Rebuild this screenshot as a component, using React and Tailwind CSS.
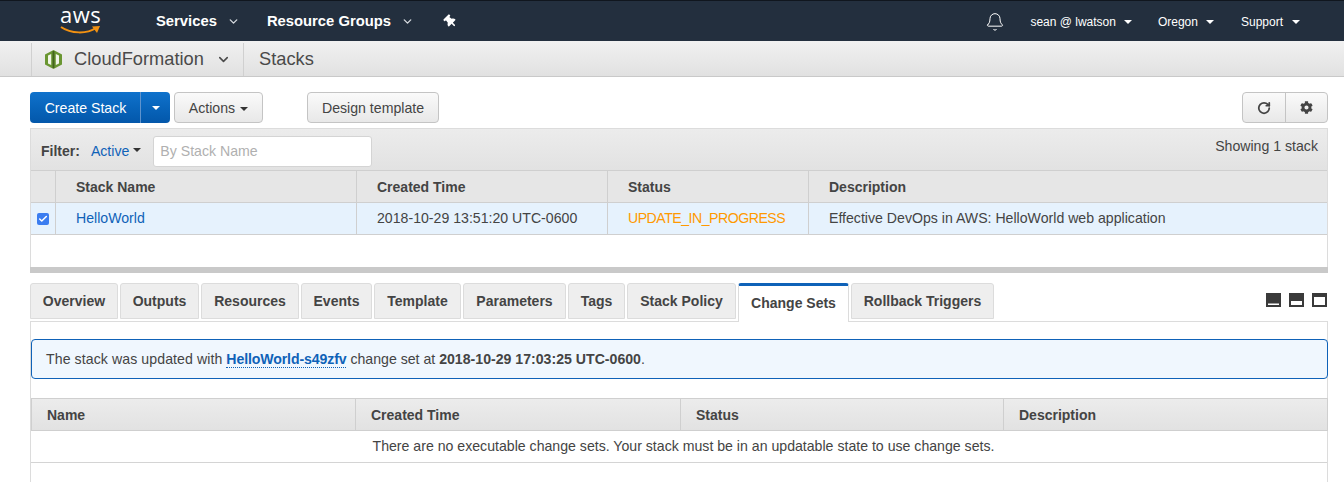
import React from 'react';
import { Bell, ChevronDown, RotateCw, Check } from 'lucide-react';
import { FaCog, FaThumbtack } from 'react-icons/fa';

const tabs = [
  ['Overview', 'w-[88px]'],
  ['Outputs', 'w-[79px]'],
  ['Resources', 'w-[98px]'],
  ['Events', 'w-[71px]'],
  ['Template', 'w-[87px]'],
  ['Parameters', 'w-[103px]'],
  ['Tags', 'w-[57px]'],
  ['Stack Policy', 'w-[109px]'],
];

const Caret = ({ className = 'border-t-[#333]' }) => (
  <span className={`inline-block w-0 h-0 border-x-4 border-x-transparent border-t-4 ${className}`} />
);

const HeadCell = ({ className = '', children }) => (
  <div className={`flex items-center font-bold text-[#444] text-[14px] pt-[1px] ${className}`}>{children}</div>
);

// the three little split-view squares on the right of the tabs
const PaneIcon = ({ variant }) => (
  <svg width="15" height="14" viewBox="0 0 15 14">
    <rect width="15" height="14" fill="#3a3a3a" />
    {variant === 'bottom' && <rect x="2" y="10.5" width="11" height="1.5" fill="#fff" />}
    {variant === 'middle' && <rect x="2" y="8" width="11" height="4" fill="#fff" />}
    {variant === 'top' && <rect x="2" y="4" width="11" height="8" fill="#fff" />}
  </svg>
);

const CubeIcon = () => (
  <svg width="17" height="19" viewBox="0 0 17 19">
    <path d="M8.5 0 L17 4.5 V14.5 L8.5 19 L0 14.5 V4.5 Z" fill="#6a9632" />
    <path d="M6.2 4 V15 L3 13.5 V5.5 Z" fill="#f1f5e8" />
    <path d="M10.8 4 V15 L14 13.5 V5.5 Z" fill="#f1f5e8" />
    <rect x="7.6" y="1" width="1.8" height="17" fill="#43621d" />
  </svg>
);

const TopBar = () => (
  <div className="h-[41px] bg-[#232f3e] border-t border-[#10161e] flex items-center text-white shrink-0">
    <div className="w-[156px] flex justify-start pl-[60px] relative h-full">
      <span className="text-[22px] leading-[24px] tracking-[0.5px] mt-[1px] font-['Open_Sans',sans-serif]">aws</span>
      <svg className="absolute left-[60px] top-[24px]" width="42" height="10" viewBox="0 0 42 10">
        <path d="M1 2 C 11 9, 27 9, 36 3" stroke="#f29111" strokeWidth="2" fill="none" />
        <path d="M32 1.5 L40 1 L37 8 Z" fill="#f29111" />
      </svg>
    </div>
    <div className="flex items-center font-bold text-[14.8px] pt-[1px]">
      <span>Services</span>
      <ChevronDown size={13} strokeWidth={2.5} className="ml-[10px] mr-[27px] text-[#d5d9de]" />
      <span>Resource Groups</span>
      <ChevronDown size={13} strokeWidth={2.5} className="ml-[10px] mr-[30px] text-[#d5d9de]" />
      <FaThumbtack size={13} className="-rotate-45" />
    </div>
    <div className="ml-auto flex items-center text-[12px] pr-[44px] pt-[1px]">
      <Bell size={20} strokeWidth={1.2} className="mr-[25px]" />
      <span>sean @ lwatson</span>
      <span className="ml-[8px] mr-[26px] flex"><Caret className="border-t-white" /></span>
      <span>Oregon</span>
      <span className="ml-[8px] mr-[27px] flex"><Caret className="border-t-white" /></span>
      <span>Support</span>
      <span className="ml-[9px] flex"><Caret className="border-t-white" /></span>
    </div>
  </div>
);

const SubBar = () => (
  <div className="h-[36px] bg-gradient-to-b from-[#f1f1f1] to-[#e1e1e1] border-b border-[#c9c9c9] flex pl-[31px] text-[18.25px] text-[#4a4a4a] shrink-0">
    <div className="flex items-center w-[213px] h-[33px] border-x border-[#d0d0d0] pl-[13px] self-end">
      <CubeIcon />
      <span className="ml-[12px] -mt-[2px]">CloudFormation</span>
      <ChevronDown size={15} strokeWidth={2.5} className="ml-[12px]" />
    </div>
    <div className="flex items-center pl-[15px] pt-[1px]">Stacks</div>
  </div>
);

const Toolbar = () => (
  <div className="flex items-center h-[31px] mt-[15px] text-[#444]">
    <div className="flex h-[31px] w-[140px] rounded-[4px] bg-gradient-to-b from-[#0f72cc] to-[#0357aa] text-white">
      <span className="w-[111px] flex items-center justify-center border-r border-[#5f93cd] pt-[2px] pl-[1px]">Create Stack</span>
      <span className="flex-1 flex items-center justify-center"><Caret className="border-t-white" /></span>
    </div>
    <button className="ml-[4px] h-[31px] w-[89px] rounded-[4px] border border-[#c4c4c4] bg-gradient-to-b from-[#fafafa] to-[#e8e8e8] flex items-center justify-center gap-[5px] pt-[2px]">
      Actions <Caret />
    </button>
    <button className="ml-[44px] h-[31px] w-[132px] rounded-[4px] border border-[#c4c4c4] bg-gradient-to-b from-[#fafafa] to-[#e8e8e8] pt-[2px]">
      Design template
    </button>
    <div className="ml-auto flex h-[31px] w-[86px] rounded-[4px] border border-[#c4c4c4] bg-gradient-to-b from-[#fafafa] to-[#e8e8e8]">
      <span className="w-[43px] flex items-center justify-center border-r border-[#c4c4c4]">
        <RotateCw size={14} strokeWidth={3} />
      </span>
      <span className="flex-1 flex items-center justify-center">
        <FaCog size={13} />
      </span>
    </div>
  </div>
);

const StackTable = () => (
  <div className="mt-[5px] border-x border-t border-[#dcdcdc] flex flex-col">
    <div className="h-[42px] bg-gradient-to-b from-[#ececec] to-[#e2e2e2] border-b border-[#cfcfcf] flex items-start pl-[10px] pr-[9px] shrink-0">
      <span className="font-bold text-[#444] mt-[12px] text-[14px]">Filter:</span>
      <span className="text-[#0f62b8] ml-[11px] mt-[12px]">Active</span>
      <span className="ml-[4px] mt-[19px] flex"><Caret /></span>
      <div className="ml-[12px] mt-[7px] w-[219px] h-[31px] bg-white border border-[#d4d4d4] rounded-[3px] flex items-center pl-[6px] text-[#b0b0b0]">
        By Stack Name
      </div>
      <span className="ml-auto mt-[7px] text-[#444]">Showing 1 stack</span>
    </div>
    <div className="h-[32px] bg-[#e6e6e6] border-b border-[#cfcfcf] flex shrink-0">
      <div className="w-[25px] border-r border-[#cfcfcf]" />
      <HeadCell className="w-[301px] border-r border-[#cfcfcf] pl-[20px]">Stack Name</HeadCell>
      <HeadCell className="w-[251px] border-r border-[#cfcfcf] pl-[20px]">Created Time</HeadCell>
      <HeadCell className="w-[201px] border-r border-[#cfcfcf] pl-[20px]">Status</HeadCell>
      <HeadCell className="flex-1 pl-[20px]">Description</HeadCell>
    </div>
    <div className="h-[32px] bg-[#e6f2fd] border-b border-[#cfcfcf] flex text-[#444] shrink-0">
      <div className="w-[25px] border-r border-[#cfcfcf] flex items-center justify-center">
        <span className="w-[12px] h-[12px] rounded-[2px] bg-[#3b7df0] flex items-center justify-center text-white">
          <Check size={10} strokeWidth={3.5} />
        </span>
      </div>
      <div className="w-[301px] border-r border-[#cfcfcf] pl-[20px] flex items-center text-[#0f62b8]">HelloWorld</div>
      <div className="w-[251px] border-r border-[#cfcfcf] pl-[20px] flex items-center">2018-10-29 13:51:20 UTC-0600</div>
      <div className="w-[201px] border-r border-[#cfcfcf] pl-[20px] flex items-center text-[#ff9900] tracking-[-0.5px]">UPDATE_IN_PROGRESS</div>
      <div className="flex-1 pl-[20px] flex items-center">Effective DevOps in AWS: HelloWorld web application</div>
    </div>
  </div>
);

const TabBar = () => (
  <div className="mt-[10px] h-[39px] flex items-start gap-[2px] border-b border-[#dcdcdc] relative text-[14px]">
    {tabs.map(([name, width]) => (
      <div
        key={name}
        className={`${width} h-[36px] bg-[#eeeeee] border border-[#dcdcdc] rounded-t-[3px] flex items-center justify-center font-bold text-[#444]`}
      >
        {name}
      </div>
    ))}
    <div className="w-[111px] h-[39px] bg-white border-x border-[#dcdcdc] border-t-[3px] border-t-[#0f62b8] rounded-t-[3px] flex items-center justify-center font-bold text-[#444] pb-[1px] z-10 -mb-[1px]">
      Change Sets
    </div>
    <div className="w-[143px] h-[36px] bg-[#eeeeee] border border-[#dcdcdc] rounded-t-[3px] flex items-center justify-center font-bold text-[#444]">
      Rollback Triggers
    </div>
    <div className="ml-auto flex gap-[8px] mt-[10px] mr-[1px]">
      <PaneIcon variant="bottom" />
      <PaneIcon variant="middle" />
      <PaneIcon variant="top" />
    </div>
  </div>
);

const ChangeSets = () => (
  <div className="border-x border-[#dcdcdc] flex-1 pt-[17px] text-[#444]">
    <div className="h-[40px] -mr-[1px] bg-[#f0f7fe] border border-[#0f62b8] rounded-[4px] flex items-center pl-[14px] pt-[1px]">
      <span>
        <span className="tracking-[0.08px]">The stack was updated with</span>{' '}
        <span className="font-bold text-[#0f62b8] border-b border-dotted border-[#0f62b8] tracking-[-0.12px]">HelloWorld-s49zfv</span>{' '}
        change set at <span className="font-bold">2018-10-29 17:03:25 UTC-0600</span>.
      </span>
    </div>
    <div className="mt-[19px] h-[33px] -mr-[1px] bg-gradient-to-b from-[#ececec] to-[#e2e2e2] border border-[#cfcfcf] flex">
      <HeadCell className="w-[324px] border-r border-[#cfcfcf] pl-[15px]">Name</HeadCell>
      <HeadCell className="w-[325px] border-r border-[#cfcfcf] pl-[15px]">Created Time</HeadCell>
      <HeadCell className="w-[323px] border-r border-[#cfcfcf] pl-[15px]">Status</HeadCell>
      <HeadCell className="flex-1 pl-[15px]">Description</HeadCell>
    </div>
    <div className="h-[32px] border-b border-[#d4d4d4] flex items-center justify-center pl-[9px]">
      There are no executable change sets. Your stack must be in an updatable state to use change sets.
    </div>
  </div>
);

export default function App() {
  return (
    <div className="w-[1344px] h-[482px] overflow-hidden bg-white flex flex-col text-[14.13px] font-['Liberation_Sans',Arial,sans-serif]">
      <TopBar />
      <SubBar />
      <div className="flex-1 flex flex-col px-[30px] pr-[16px] min-h-0">
        <Toolbar />
        <StackTable />
        <div className="h-[32px] border-x border-[#dcdcdc] shrink-0" />
        <div className="h-[6px] bg-[#c9c9c9] shrink-0" />
        <TabBar />
        <ChangeSets />
      </div>
    </div>
  );
}
